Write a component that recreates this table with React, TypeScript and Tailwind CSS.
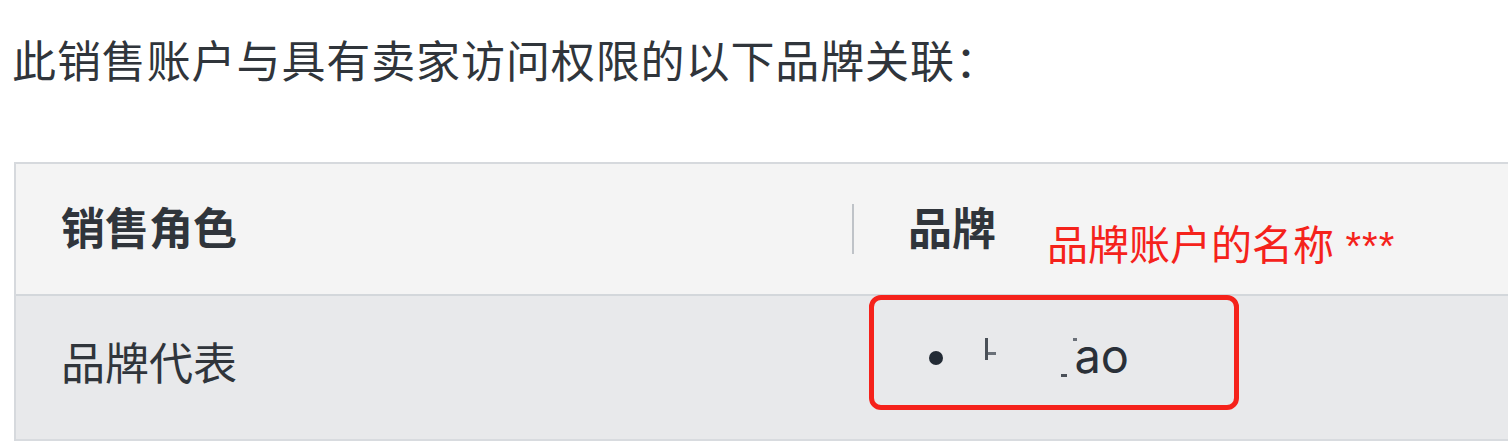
const cjk = "font-['Inter','Noto_Sans_CJK_SC',sans-serif]"

export default function App() {
  return (
    <div className={`h-[444px] w-[1508px] overflow-hidden bg-white ${cjk} text-[#30353b]`}>
      <p className="pl-[12px] pt-[40px] text-[44px] leading-[44px] tracking-[0.9px]">
        此销售账户与具有卖家访问权限的以下品牌关联：
      </p>

      <div className="ml-[14px] mt-[78px] w-[1520px] border-l-2 border-t-2 border-[#d6d9dd]">
        {/* header */}
        <div className="flex h-[132px] items-center border-b-2 border-[#d3d7db] bg-[#f4f4f4]">
          <div className="w-[836px] pl-[45px] text-[44px] font-bold">销售角色</div>
          <div className="relative flex h-[50px] flex-1 items-center border-l-2 border-[#bfc3c8] pl-[54px]">
            <span className="text-[44px] font-bold">品牌</span>
            <span className="absolute left-[193px] top-[17px] whitespace-nowrap text-[41px] leading-[48px] text-[#f5221b]">
              品牌账户的名称 <span className="font-['Liberation_Sans',sans-serif] text-[40px] tracking-[1px]">***</span>
            </span>
          </div>
        </div>

        {/* body row */}
        <div className="flex h-[145px] border-b-2 border-[#d8dbdf] bg-[#e8e9eb]">
          <div className="w-[836px] pl-[45px] pt-[38px] text-[44px] leading-[60px]">品牌代表</div>
          <div className="relative flex-1">
            <div className="absolute left-[17px] top-[-1px] h-[115px] w-[370px] rounded-[12px] border-[5px] border-[#f5221b]" />
            <ul className="flex items-center pl-[77px] pt-[40px]">
              <li className="flex items-center gap-[34px]">
                <span className="h-[14px] w-[14px] rounded-full bg-[#232b35]" />
                <span className="relative h-[44px] w-[152px]">
                  <span className="absolute left-[8px] top-[2px] h-[22px] w-[3px] bg-[#4a5058]" />
                  <span className="absolute left-[11px] top-[16px] h-[3px] w-[8px] bg-[#6a7078]" />
                  <span className="absolute right-[0px] top-[-7px] font-['Inter',sans-serif] text-[47px] leading-[54px] text-[#2a3038]">
                    ao
                  </span>
                  <span className="absolute right-[62px] top-[38px] h-[3px] w-[6px] bg-[#4a5058]" />
                  <span className="absolute right-[52px] top-[2px] h-[3px] w-[4px] bg-[#6a7078]" />
                </span>
              </li>
            </ul>
          </div>
        </div>
      </div>
    </div>
  )
}
